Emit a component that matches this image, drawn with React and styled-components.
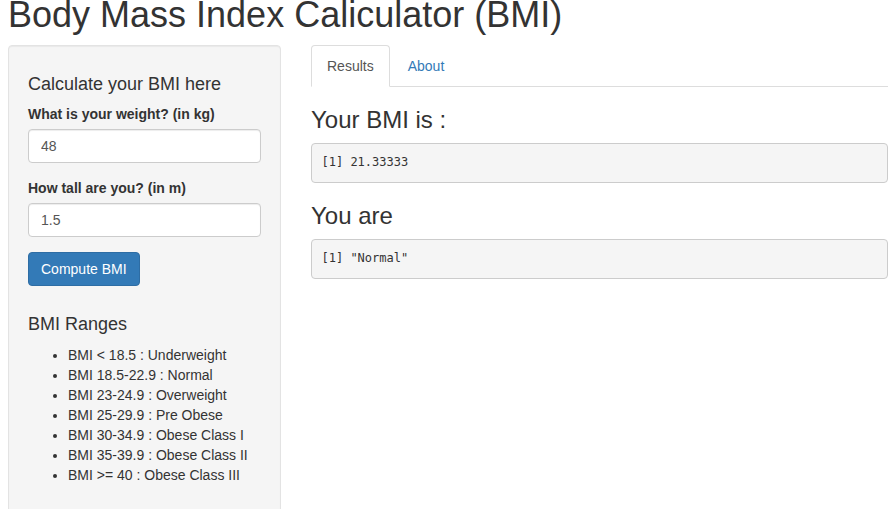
import React from "react";
import styled, { createGlobalStyle } from "styled-components";

const GlobalStyle = createGlobalStyle`
  html, body {
    margin: 0;
    padding: 0;
    overflow: hidden;
    background: #fff;
  }
  body {
    font-family: "Liberation Sans", Arial, sans-serif;
    font-size: 14px;
    line-height: 1.42857143;
    color: #333;
  }
  * { box-sizing: border-box; }
`;

const Page = styled.div`
  padding: 0 7px 0 8px;
`;

const Title = styled.h1`
  font-size: 36px;
  font-weight: 500;
  line-height: 1.1;
  margin: -5px 0 10px;
  color: #333;
`;

const Row = styled.div`
  display: flex;
  align-items: flex-start;
  gap: 30px;
`;

const Well = styled.div`
  width: 273px;
  flex: none;
  padding: 19px;
  background: #f5f5f5;
  border: 1px solid #e3e3e3;
  border-radius: 4px;
  box-shadow: inset 0 1px 1px rgba(0, 0, 0, 0.05);
`;

const SideHeading = styled.h4`
  font-size: 18px;
  font-weight: 500;
  line-height: 1.1;
  margin: ${(p) => p.$top || 10}px 0 10px;
`;

const FormGroup = styled.div`
  margin-bottom: 15px;
`;

const Label = styled.label`
  display: inline-block;
  max-width: 100%;
  margin-bottom: 5px;
  font-weight: 700;
`;

const Input = styled.input`
  display: block;
  width: 100%;
  height: 34px;
  padding: 6px 12px;
  font-family: inherit;
  font-size: 14px;
  line-height: 1.42857143;
  color: #555;
  background: #fff;
  border: 1px solid #ccc;
  border-radius: 4px;
  box-shadow: inset 0 1px 1px rgba(0, 0, 0, 0.075);
  outline: none;
`;

const Button = styled.button`
  display: inline-block;
  height: 34px;
  padding: 6px 12px;
  font-family: inherit;
  font-size: 14px;
  line-height: 1.42857143;
  color: #fff;
  background: #337ab7;
  border: 1px solid #2e6da4;
  border-radius: 4px;
  cursor: pointer;
`;

const RangeList = styled.ul`
  margin: 0 0 10px;
  padding-left: 40px;
`;

const Main = styled.div`
  width: 577px;
  flex: none;
`;

const Tabs = styled.ul`
  display: flex;
  list-style: none;
  margin: 0;
  padding: 0;
  border-bottom: 1px solid #ddd;
`;

const TabItem = styled.li`
  margin-bottom: -1px;
`;

const TabLink = styled.a`
  display: block;
  margin-right: 2px;
  padding: 10px 15px;
  line-height: 1.42857143;
  border: 1px solid transparent;
  border-radius: 4px 4px 0 0;
  text-decoration: none;
  cursor: pointer;
  color: ${(p) => (p.$active ? "#555" : "#337ab7")};
  background: ${(p) => (p.$active ? "#fff" : "transparent")};
  border-color: ${(p) => (p.$active ? "#ddd #ddd transparent" : "transparent")};
`;

const ResultHeading = styled.h3`
  font-size: 24px;
  font-weight: 500;
  line-height: 1.1;
  margin: 20px 0 10px;
`;

const Output = styled.pre`
  display: block;
  margin: 0 0 10px;
  padding: 9.5px;
  font-family: "DejaVu Sans Mono", "Liberation Mono", monospace;
  font-size: 12px;
  line-height: 18.57px;
  color: #333;
  background: #f5f5f5;
  border: 1px solid #ccc;
  border-radius: 4px;
  white-space: pre-wrap;
`;

const ranges = [
  "BMI < 18.5 : Underweight",
  "BMI 18.5-22.9 : Normal",
  "BMI 23-24.9 : Overweight",
  "BMI 25-29.9 : Pre Obese",
  "BMI 30-34.9 : Obese Class I",
  "BMI 35-39.9 : Obese Class II",
  "BMI >= 40 : Obese Class III",
];

export default function App() {
  return (
    <>
      <GlobalStyle />
      <Page>
        <Title>Body Mass Index Caliculator (BMI)</Title>
        <Row>
          <Well>
            <SideHeading>Calculate your BMI here</SideHeading>
            <FormGroup>
              <Label>What is your weight? (in kg)</Label>
              <Input type="number" defaultValue="48" />
            </FormGroup>
            <FormGroup>
              <Label>How tall are you? (in m)</Label>
              <Input type="number" defaultValue="1.5" />
            </FormGroup>
            <Button>Compute BMI</Button>
            <SideHeading $top={29}>BMI Ranges</SideHeading>
            <RangeList>
              {ranges.map((r) => (
                <li key={r}>{r}</li>
              ))}
            </RangeList>
          </Well>
          <Main>
            <Tabs>
              <TabItem>
                <TabLink $active>Results</TabLink>
              </TabItem>
              <TabItem>
                <TabLink>About</TabLink>
              </TabItem>
            </Tabs>
            <ResultHeading>Your BMI is :</ResultHeading>
            <Output>[1] 21.33333</Output>
            <ResultHeading>You are</ResultHeading>
            <Output>[1] "Normal"</Output>
          </Main>
        </Row>
      </Page>
    </>
  );
}
